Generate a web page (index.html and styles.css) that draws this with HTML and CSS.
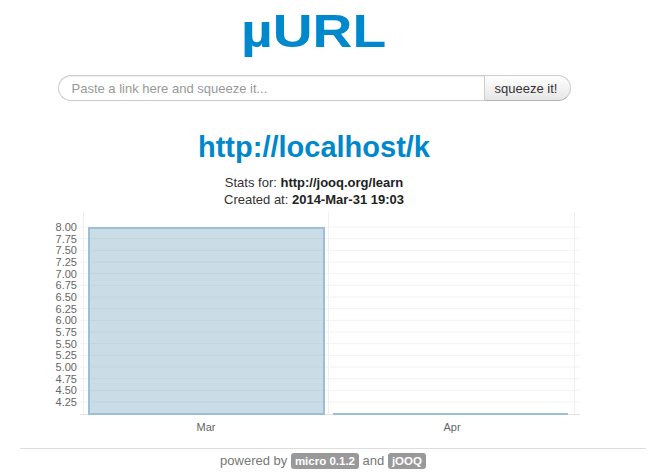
FILE: index.html
```html
<!DOCTYPE html>
<html>
<head>
<meta charset="utf-8">
<link rel="stylesheet" href="styles.css">
</head>
<body>
<div class="main">
  <h1 class="brand">µURL</h1>
  <form class="squeeze">
    <input class="link-input" type="text" placeholder="Paste a link here and squeeze it...">
    <button class="squeeze-btn" type="button">squeeze it!</button>
  </form>
  <h2 class="short">http://localhost/k</h2>
  <p class="meta">Stats for: <b>http://jooq.org/learn</b></p>
  <p class="meta">Created at: <b>2014-Mar-31 19:03</b></p>
  <div class="chart">
    <svg width="588" height="228" viewBox="0 0 588 228">
      <g class="hgrid">
        <line x1="60" x2="560" y1="15" y2="15"/>
        <line x1="60" x2="560" y1="26.67" y2="26.67"/>
        <line x1="60" x2="560" y1="38.33" y2="38.33"/>
        <line x1="60" x2="560" y1="50" y2="50"/>
        <line x1="60" x2="560" y1="61.67" y2="61.67"/>
        <line x1="60" x2="560" y1="73.33" y2="73.33"/>
        <line x1="60" x2="560" y1="85" y2="85"/>
        <line x1="60" x2="560" y1="96.67" y2="96.67"/>
        <line x1="60" x2="560" y1="108.33" y2="108.33"/>
        <line x1="60" x2="560" y1="120" y2="120"/>
        <line x1="60" x2="560" y1="131.67" y2="131.67"/>
        <line x1="60" x2="560" y1="143.33" y2="143.33"/>
        <line x1="60" x2="560" y1="155" y2="155"/>
        <line x1="60" x2="560" y1="166.67" y2="166.67"/>
        <line x1="60" x2="560" y1="178.33" y2="178.33"/>
        <line x1="60" x2="560" y1="190" y2="190"/>
      </g>
      <g class="vgrid">
        <line x1="63.5" x2="63.5" y1="0" y2="202"/>
        <line x1="308.5" x2="308.5" y1="0" y2="202"/>
        <line x1="554.5" x2="554.5" y1="0" y2="202"/>
      </g>
      <line class="axis" x1="60" x2="560" y1="202.5" y2="202.5"/>
      <rect class="bar" x="69" y="16" width="235" height="186"/>
      <line class="bar-flat" x1="313" x2="548" y1="202" y2="202"/>
      <g class="ylabels">
        <text x="57" y="19">8.00</text>
        <text x="57" y="30.67">7.75</text>
        <text x="57" y="42.33">7.50</text>
        <text x="57" y="54">7.25</text>
        <text x="57" y="65.67">7.00</text>
        <text x="57" y="77.33">6.75</text>
        <text x="57" y="89">6.50</text>
        <text x="57" y="100.67">6.25</text>
        <text x="57" y="112.33">6.00</text>
        <text x="57" y="124">5.75</text>
        <text x="57" y="135.67">5.50</text>
        <text x="57" y="147.33">5.25</text>
        <text x="57" y="159">5.00</text>
        <text x="57" y="170.67">4.75</text>
        <text x="57" y="182.33">4.50</text>
        <text x="57" y="194">4.25</text>
      </g>
      <g class="xlabels">
        <text x="186" y="219">Mar</text>
        <text x="432" y="219">Apr</text>
      </g>
    </svg>
  </div>
</div>
<footer class="foot">
  <p class="powered">powered by <span class="tag">micro 0.1.2</span> and <span class="tag">jOOQ</span></p>
</footer>
</body>
</html>
```
FILE: styles.css
```css
html, body {
  margin: 0;
  padding: 0;
  background: #fff;
}
body {
  font-family: "Liberation Sans", Arial, Helvetica, sans-serif;
  color: #333;
}
.main {
  width: 588px;
  margin-left: 20px;
  display: flex;
  flex-direction: column;
  align-items: center;
}
.brand {
  margin: 6px 0 0;
  font-size: 46px;
  line-height: 50px;
  font-weight: bold;
  color: #0088cc;
  transform: scaleX(1.2);
}
.squeeze {
  margin: 19px 0 0;
  display: flex;
  width: 513px;
}
.link-input {
  flex: 1;
  height: 26px;
  box-sizing: border-box;
  border: 1px solid #ccc;
  border-right: none;
  border-radius: 14px 0 0 14px;
  padding: 0 13px;
  font-family: inherit;
  font-size: 13px;
  color: #555;
  box-shadow: inset 0 1px 1px rgba(0,0,0,0.075);
  outline: none;
}
.link-input::placeholder {
  color: #999;
}
.squeeze-btn {
  width: 87px;
  height: 26px;
  box-sizing: border-box;
  border: 1px solid #ccc;
  border-bottom-color: #b3b3b3;
  border-radius: 0 14px 14px 0;
  background: linear-gradient(#ffffff, #e6e6e6);
  font-family: inherit;
  font-size: 13px;
  color: #333;
  padding: 0 2px 0 0;
}
.short {
  margin: 30px 0 0;
  font-size: 29px;
  line-height: 32px;
  font-weight: bold;
  color: #0088cc;
}
.meta {
  margin: 0;
  font-size: 13px;
  line-height: 17px;
  color: #333;
}
.meta:first-of-type {
  margin-top: 11px;
}
.meta b {
  color: #222;
}
.chart {
  align-self: stretch;
  height: 228px;
  margin-top: 4px;
}
.chart svg {
  display: block;
}
.hgrid line {
  stroke: #f2f2f2;
  stroke-width: 1;
}
.vgrid line {
  stroke: #efefef;
  stroke-width: 1;
}
.axis {
  stroke: #e4e4e4;
  stroke-width: 1;
}
.bar {
  fill: #7aa9c4;
  fill-opacity: 0.4;
  stroke: #9dbfd6;
  stroke-width: 2;
}
.bar-flat {
  stroke: #9dbfd6;
  stroke-width: 2;
}
.ylabels text {
  font-family: "Liberation Sans", Arial, sans-serif;
  font-size: 11px;
  fill: #666;
  text-anchor: end;
}
.xlabels text {
  font-family: "Liberation Sans", Arial, sans-serif;
  font-size: 11px;
  fill: #666;
  text-anchor: middle;
}
.foot {
  margin: 8px 20px 0;
  border-top: 1px solid #ddd;
}
.powered {
  margin: 3px 0 0;
  text-align: center;
  padding-right: 20px;
  font-size: 13px;
  line-height: 18px;
  color: #777;
}
.tag {
  display: inline-block;
  background: #999;
  color: #fff;
  font-weight: bold;
  font-size: 11.5px;
  line-height: 14px;
  padding: 1px 4px 1px;
  border-radius: 3px;
}
```
